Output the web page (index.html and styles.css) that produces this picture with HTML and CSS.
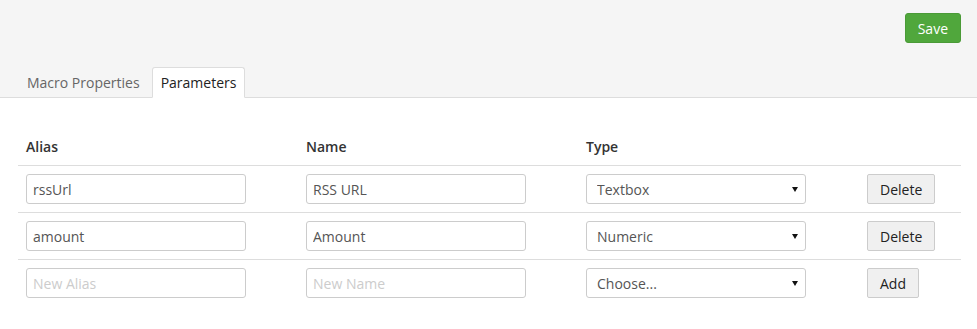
FILE: index.html
```html
<!DOCTYPE html>
<html lang="en">

<head>
    <meta charset="UTF-8">
    <meta name="viewport" content="width=device-width, initial-scale=1.0">
    <title>Macro Parameters</title>
    <link rel="stylesheet" href="styles.css">
</head>

<body>
    <div class="topbar">
        <div class="actions">
            <button class="btn-save">Save</button>
        </div>
        <ul class="tabs">
            <li class="tab">Macro Properties</li>
            <li class="tab active">Parameters</li>
        </ul>
    </div>

    <table class="params">
        <colgroup>
            <col class="col-alias">
            <col class="col-name">
            <col class="col-type">
            <col class="col-action">
        </colgroup>
        <thead>
            <tr>
                <th>Alias</th>
                <th>Name</th>
                <th>Type</th>
                <th></th>
            </tr>
        </thead>
        <tbody>
            <tr>
                <td><input type="text" value="rssUrl"></td>
                <td><input type="text" value="RSS URL"></td>
                <td>
                    <span class="select-wrap">
                        <select>
                            <option>Textbox</option>
                        </select>
                    </span>
                </td>
                <td><button class="btn">Delete</button></td>
            </tr>
            <tr>
                <td><input type="text" value="amount"></td>
                <td><input type="text" value="Amount"></td>
                <td>
                    <span class="select-wrap">
                        <select>
                            <option>Numeric</option>
                        </select>
                    </span>
                </td>
                <td><button class="btn">Delete</button></td>
            </tr>
            <tr>
                <td><input type="text" placeholder="New Alias"></td>
                <td><input type="text" placeholder="New Name"></td>
                <td>
                    <span class="select-wrap">
                        <select>
                            <option>Choose...</option>
                        </select>
                    </span>
                </td>
                <td><button class="btn">Add</button></td>
            </tr>
        </tbody>
    </table>
</body>

</html>
```

FILE: styles.css
```css
body {
    margin: 0;
    background-color: #fff;
    color: #333;
    font-family: "Open Sans", "Liberation Sans", sans-serif;
    font-size: 14px;
}

.topbar {
    background-color: #f5f5f5;
    border-bottom: 1px solid #ddd;
    height: 98px;
    box-sizing: border-box;
    display: flex;
    flex-direction: column;
    justify-content: space-between;
}

.actions {
    display: flex;
    justify-content: flex-end;
    padding: 13px 16px 0;
}

.btn-save {
    height: 30px;
    padding: 0 12px;
    font-family: inherit;
    font-size: 14px;
    color: #fff;
    background-color: #50a73c;
    border: 1px solid #4a9a37;
    border-radius: 3px;
}

.tabs {
    list-style: none;
    margin: 0 0 -1px;
    padding: 0 0 0 18px;
    display: flex;
}

.tab {
    height: 31px;
    box-sizing: border-box;
    padding: 5px 8px 0;
    margin-right: 3px;
    line-height: 20px;
    color: #666;
    border: 1px solid transparent;
    border-bottom: none;
}

.tab.active {
    color: #222;
    background-color: #fff;
    border-color: #ddd;
    border-radius: 3px 3px 0 0;
    border-bottom: 1px solid #fff;
}

.params {
    margin: 31px 0 0 18px;
    width: 943px;
    table-layout: fixed;
    border-collapse: collapse;
}

.col-alias,
.col-name {
    width: 280px;
}

.col-type {
    width: 281px;
}

.col-action {
    width: 102px;
}

th {
    text-align: left;
    font-weight: 600;
    color: #333;
    padding: 8px;
    line-height: 20px;
    border-bottom: 1px solid #ddd;
}

td {
    padding: 8px;
    line-height: 20px;
    vertical-align: middle;
}

tbody tr + tr td {
    border-top: 1px solid #ddd;
}

input,
select {
    display: block;
    width: 220px;
    height: 30px;
    box-sizing: border-box;
    font-family: inherit;
    font-size: 14px;
    color: #555;
    border: 1px solid #ccc;
    border-radius: 3px;
    background-color: #fff;
    padding: 0 6px;
    margin: 0;
}

input::placeholder {
    color: #ccc;
}

.select-wrap {
    position: relative;
    display: block;
    width: 220px;
}

select {
    appearance: none;
    padding: 0 10px;
}

.select-wrap::after {
    content: "";
    position: absolute;
    right: 8px;
    top: 13px;
    border-left: 3px solid transparent;
    border-right: 3px solid transparent;
    border-top: 5px solid #111;
}

.btn {
    display: block;
    height: 30px;
    padding: 0 12px;
    font-family: inherit;
    font-size: 14px;
    color: #222;
    background-color: #f0f0f0;
    border: 1px solid #ccc;
    border-radius: 2px;
}
```
